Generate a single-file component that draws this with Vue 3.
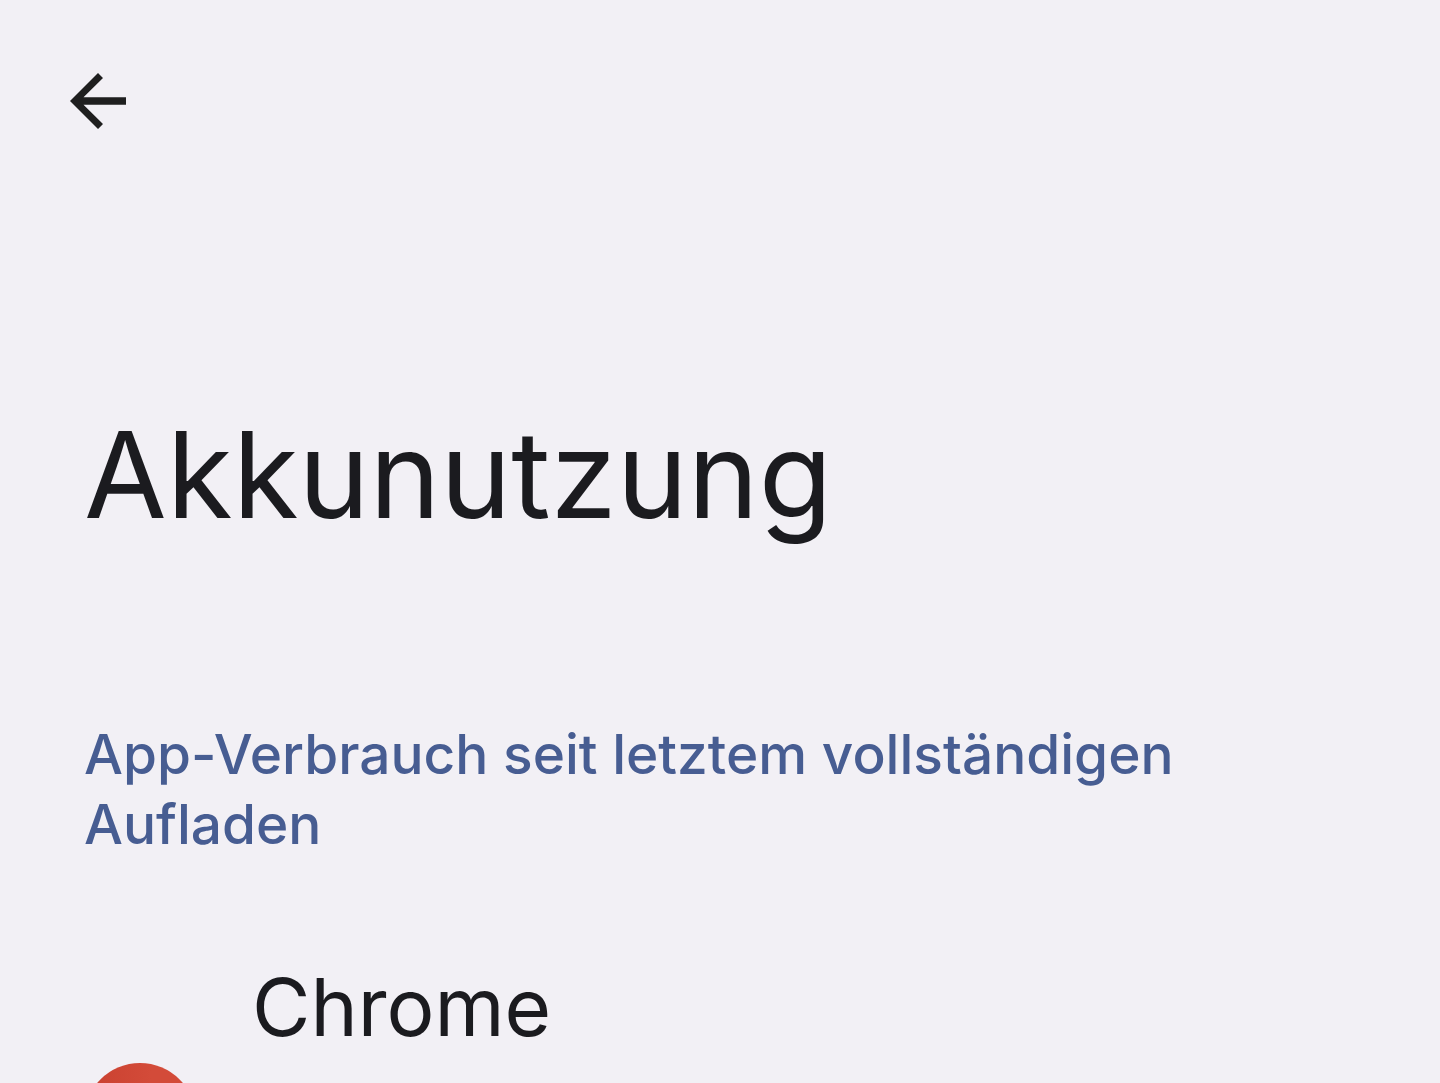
<script setup>
const apps = [{ id: 'chrome', name: 'Chrome' }]
</script>

<template>
  <div class="screen">
    <header class="bar">
      <button class="back" type="button" aria-label="Zurück">
        <svg viewBox="0 0 56 56" width="56" height="56" aria-hidden="true">
          <path d="M56 24.3H13.5L33 4.9 28 0 0 28l28 28 5-4.9L13.5 31.7H56z" fill="#1f1f1f" />
        </svg>
      </button>
    </header>
    <main>
      <h1>Akkunutzung</h1>
      <h2>App-Verbrauch seit letztem vollständigen Aufladen</h2>
      <ul class="apps">
        <li v-for="app in apps" :key="app.id" class="app">
          <svg class="logo" viewBox="0 0 112 112" width="112" height="112" aria-hidden="true">
            <defs>
              <linearGradient id="logo-red" x1="0" y1="0" x2="1" y2="0">
                <stop offset="0.1" stop-color="#cb4231" />
                <stop offset="0.6" stop-color="#d34b39" />
              </linearGradient>
            </defs>
            <circle cx="56" cy="56" r="56" fill="url(#logo-red)" />
          </svg>
          <span class="name">{{ app.name }}</span>
        </li>
      </ul>
    </main>
  </div>
</template>

<style>
body {
  background: #f2f0f5;
}
</style>

<style scoped>
.screen {
  height: 100vh;
  overflow: hidden;
  box-sizing: border-box;
  padding: 73px 84px 0;
  background: #f2f0f5;
  color: #1b1b1f;
  font-family: Inter, sans-serif;
}
.bar {
  display: flex;
  margin-left: -14px;
}
.back {
  display: flex;
  padding: 0;
  border: 0;
  background: none;
}
h1 {
  margin: 266px 0 0;
  font-size: 120px;
  font-weight: 400;
  line-height: 160px;
}
h2 {
  margin: 164px 0 0;
  color: #475d92;
  font-size: 55px;
  font-weight: 500;
  line-height: 70px;
}
.apps {
  margin: 98px 0 0;
  padding: 0;
  list-style: none;
}
.app {
  display: flex;
  align-items: flex-start;
  gap: 56px;
}
.logo {
  flex: none;
  margin-top: 106px;
}
.name {
  font-size: 80px;
  line-height: 100px;
}
</style>
